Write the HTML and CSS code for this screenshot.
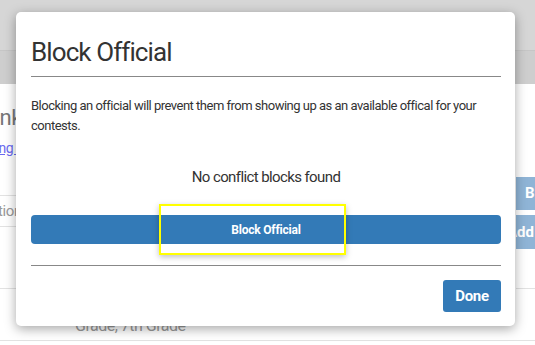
FILE: index.html
```html
<!DOCTYPE html>
<html lang="en">
  <head>
    <meta charset="UTF-8" />
    <meta name="viewport" content="width=device-width, initial-scale=1.0" />
    <title>Block Official</title>
    <link rel="stylesheet" href="styles.css">
  </head>
  <body>
    <div class="topbar"></div>
    <div class="subbar"></div>
    <div class="page">
      <div class="left-col">
        <div class="page-title">Rank</div>
        <a class="page-link" href="#">Missing Info</a>
        <div class="row-line first-line"></div>
        <div class="row-label">Location</div>
        <div class="row-line"></div>
        <div class="row-gap"></div>
        <div class="row-line"></div>
      </div>
      <div class="mid-col">
        <div class="grade-text">Grade, 7th Grade</div>
      </div>
      <div class="right-col">
        <div class="side-btn">Block</div>
        <div class="side-btn add">Add</div>
        <div class="row-line right-line"></div>
      </div>
    </div>
    <div class="bottom-line"></div>

    <div class="modal">
      <div class="modal-header">
        <h2>Block Official</h2>
      </div>
      <div class="modal-body">
        <p>
          Blocking an official will prevent them from showing up as an available
          offical for your contests.
        </p>
        <div class="empty-msg">No conflict blocks found</div>
        <div class="btn-wrap">
          <button type="button" class="btn btn-block">Block Official</button>
          <div class="highlight"></div>
        </div>
      </div>
      <div class="modal-footer">
        <button type="button" class="btn btn-done">Done</button>
      </div>
    </div>
  </body>
</html>
```

FILE: styles.css
```css
body {
  margin: 0;
  padding: 0;
  font-family: Roboto, "Liberation Sans", sans-serif;
  background: #fff;
  color: #333;
  height: 345px;
  overflow: hidden;
  position: relative;
}
.topbar {
  height: 50px;
  background: #d6d6d6;
  border-bottom: 1px solid #c6c6c6;
}
.subbar {
  height: 33px;
  background: #cecece;
}
.page {
  display: flex;
  height: 256px;
}
.left-col {
  width: 16px;
  overflow: hidden;
  white-space: nowrap;
}
.page-title {
  margin: 22px 0 0 -25px;
  font-size: 22px;
  line-height: 24px;
  color: #777;
  letter-spacing: -0.5px;
}
.page-link {
  display: block;
  margin: 9px 0 0 -33px;
  font-size: 14px;
  line-height: 18px;
  color: #6a6af0;
  letter-spacing: -0.4px;
}
.row-line {
  height: 1px;
  background: #e2e2e2;
  width: 100%;
}
.first-line {
  margin-top: 38px;
}
.row-label {
  margin-left: -33px;
  height: 30px;
  line-height: 30px;
  font-size: 15px;
  color: #999;
  letter-spacing: -0.4px;
}
.row-gap {
  height: 61px;
}
.mid-col {
  flex: 1;
  display: flex;
  align-items: flex-end;
}
.grade-text {
  margin: 0 0 5px 59px;
  font-size: 16px;
  color: #999;
  letter-spacing: -0.5px;
}
.right-col {
  width: 19px;
  overflow: hidden;
  white-space: nowrap;
}
.side-btn {
  margin-top: 93px;
  height: 33px;
  line-height: 33px;
  background: #8fb4d6;
  color: #fff;
  font-size: 15px;
  font-weight: bold;
  padding-left: 9px;
  letter-spacing: 1px;
}
.side-btn.add {
  margin-top: 5px;
  height: 34px;
  line-height: 34px;
  padding-left: 0;
  text-indent: -9px;
  letter-spacing: 0;
}
.right-line {
  margin-top: 39px;
}
.bottom-line {
  height: 1px;
  background: #e2e2e2;
}

.modal {
  position: absolute;
  top: 12px;
  left: 16px;
  width: 499px;
  height: 314px;
  box-sizing: border-box;
  background: #fff;
  border-radius: 5px;
  box-shadow: 0 3px 12px rgba(0, 0, 0, 0.35);
  padding: 0 14px 15px 15px;
}
.modal-header {
  padding-top: 25px;
  border-bottom: 1px solid #888;
}
.modal-header h2 {
  margin: 0 0 9px;
  font-size: 26px;
  line-height: 30px;
  font-weight: normal;
  color: #333;
  letter-spacing: -0.9px;
}
.modal-body {
  padding-top: 19px;
}
.modal-body p {
  margin: 0;
  font-size: 13px;
  line-height: 20px;
  color: #333;
  letter-spacing: -0.5px;
}
.empty-msg {
  margin-top: 31px;
  text-align: center;
  font-size: 15px;
  line-height: 20px;
  color: #333;
  letter-spacing: -0.6px;
}
.btn-wrap {
  position: relative;
  margin-top: 28px;
}
.btn {
  border: none;
  background: #337ab7;
  color: #fff;
  font-family: inherit;
  font-weight: bold;
  cursor: pointer;
}
.btn-block {
  display: block;
  width: 100%;
  height: 29px;
  border-radius: 4px;
  font-size: 12px;
  letter-spacing: -0.2px;
}
.highlight {
  position: absolute;
  left: 128px;
  top: -11px;
  width: 187px;
  height: 51px;
  box-sizing: border-box;
  border: 2px solid #ffff00;
  box-shadow: 0 2px 6px rgba(0, 0, 0, 0.25);
}
.modal-footer {
  margin-top: 21px;
  padding-top: 14px;
  border-top: 1px solid #888;
  display: flex;
  justify-content: flex-end;
}
.btn-done {
  width: 58px;
  height: 32px;
  border-radius: 3px;
  font-size: 15px;
  letter-spacing: -0.3px;
}
```
